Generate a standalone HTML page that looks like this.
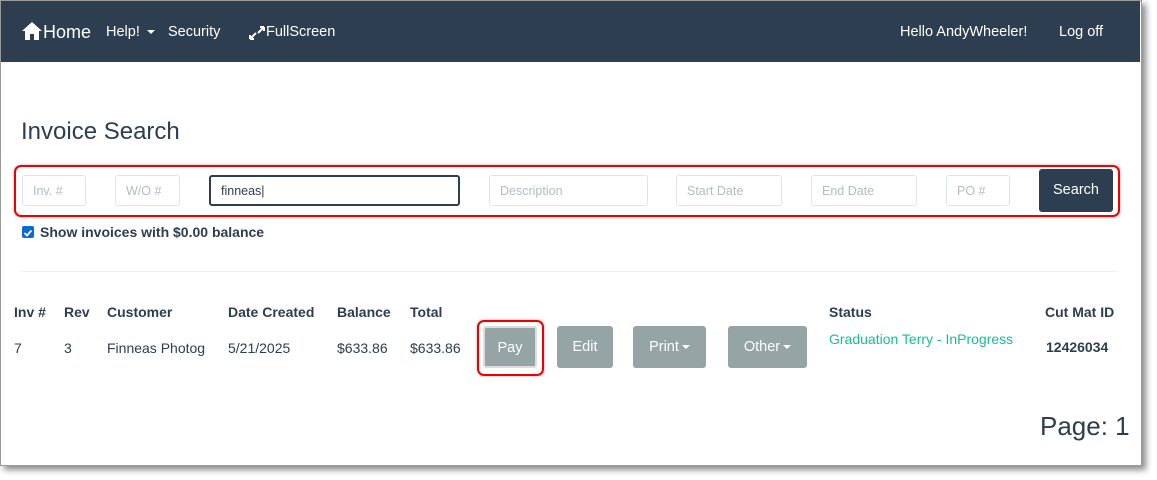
<!DOCTYPE html>
<html><head><style>
*{box-sizing:border-box;margin:0;padding:0}
body{width:1157px;height:480px;background:#fff;font-family:"Liberation Sans",sans-serif;position:relative;overflow:hidden;color:#2c3e50}
.frame{position:absolute;left:0;top:0;width:1142px;height:466px;background:#fff;border:1px solid #9a9a9a;box-shadow:4px 4px 6px rgba(0,0,0,.45)}
.nav{position:absolute;left:1px;top:1px;width:1139px;height:61px;background:#2c3e50;color:#fff}
.a{position:absolute;font-size:14.5px;top:23px;color:#fff}
.inp{position:absolute;top:175px;height:31px;border:1px solid #dce4ec;border-radius:3px;font-size:12.5px;color:#b4bcc2;padding:8px 10px;white-space:nowrap}
.hdr{position:absolute;top:304px;font-size:14px;font-weight:bold;color:#2c3e50}
.cell{position:absolute;top:340px;font-size:14px;color:#2c3e50}
.btn{position:absolute;top:326px;height:42px;background:#95a5a6;color:#fff;border-radius:3px;font-size:14.5px;text-align:center;line-height:43px}
.car{display:inline-block;width:0;height:0;border-left:4px solid transparent;border-right:4px solid transparent;border-top:4px solid #fff;vertical-align:middle;margin-left:3px}
</style></head><body>
<div class="frame"></div>
<div class="nav">
<svg style="position:absolute;left:21px;top:21px" width="20" height="18" viewBox="0 0 20 18"><path d="M10 0L0 9h3v9h5v-6h4v6h5V9h3z" fill="#fff"/></svg>
<div class="a" style="left:42px;top:21px;font-size:18px">Home</div>
<div class="a" style="left:105px">Help! <span class="car"></span></div>
<div class="a" style="left:167px">Security</div>
<svg style="position:absolute;left:247px;top:24px" width="18" height="16" viewBox="0 0 18 16"><path d="M2 14L8 8M2 14h4M2 14v-4M16 2L10 8M16 2h-4M16 2v4" stroke="#fff" stroke-width="2" fill="none"/></svg>
<div class="a" style="left:265px">FullScreen</div>
<div class="a" style="left:899px">Hello AndyWheeler!</div>
<div class="a" style="left:1058px">Log off</div>
</div>
<div style="position:absolute;left:21px;top:118px;font-size:24px;color:#2c3e50">Invoice Search</div>
<div style="position:absolute;left:14px;top:165px;width:1106px;height:52px;border:2px solid #e00;border-radius:7px;box-shadow:0 0 3px rgba(0,0,0,.3)"></div>
<div class="inp" style="left:22px;width:64px">Inv. #</div>
<div class="inp" style="left:115px;width:65px">W/O #</div>
<div class="inp" style="left:209px;width:251px;border:2px solid #2c3e50;color:#2c3e50;padding-top:7px">finneas|</div>
<div class="inp" style="left:489px;width:159px">Description</div>
<div class="inp" style="left:676px;width:106px">Start Date</div>
<div class="inp" style="left:811px;width:106px">End Date</div>
<div class="inp" style="left:946px;width:64px">PO #</div>
<div style="position:absolute;left:1039px;top:169px;width:74px;height:43px;background:#2c3e50;color:#fff;border-radius:3px;font-size:14.5px;text-align:center;line-height:43px">Search</div>
<div style="position:absolute;left:22px;top:226px;width:12px;height:12px;background:#0b6bd6;border-radius:2px"><svg width="12" height="12"><path d="M2.5 6l2.5 2.5 4.5-5" stroke="#fff" stroke-width="1.8" fill="none"/></svg></div>
<div style="position:absolute;left:40px;top:224px;font-size:14px;font-weight:bold;color:#2c3e50">Show invoices with $0.00 balance</div>
<div style="position:absolute;left:21px;top:271px;width:1096px;height:1px;background:#eee"></div>
<div class="hdr" style="left:14px">Inv #</div>
<div class="hdr" style="left:64px">Rev</div>
<div class="hdr" style="left:107px">Customer</div>
<div class="hdr" style="left:228px">Date Created</div>
<div class="hdr" style="left:337px">Balance</div>
<div class="hdr" style="left:410px">Total</div>
<div class="hdr" style="left:829px">Status</div>
<div class="hdr" style="left:1045px">Cut Mat ID</div>
<div class="cell" style="left:14px">7</div>
<div class="cell" style="left:64px">3</div>
<div class="cell" style="left:107px">Finneas Photog</div>
<div class="cell" style="left:228px">5/21/2025</div>
<div class="cell" style="left:337px">$633.86</div>
<div class="cell" style="left:410px">$633.86</div>
<div style="position:absolute;left:477px;top:320px;width:67px;height:56px;border:2px solid #e00;border-radius:7px;box-shadow:0 0 3px rgba(0,0,0,.3)"></div>
<div class="btn" style="left:483px;width:54px;border:2px solid #ddd;line-height:40px">Pay</div>
<div class="btn" style="left:557px;width:56px">Edit</div>
<div class="btn" style="left:633px;width:73px">Print<span class="car"></span></div>
<div class="btn" style="left:728px;width:79px">Other<span class="car"></span></div>
<div style="position:absolute;left:829px;top:331px;font-size:14px;color:#18bc9c">Graduation Terry - InProgress</div>
<div style="position:absolute;left:1046px;top:339px;font-size:14px;font-weight:bold">12426034</div>
<div style="position:absolute;left:1040px;top:411px;font-size:26px;color:#2c3e50">Page: 1</div>
</body></html>
